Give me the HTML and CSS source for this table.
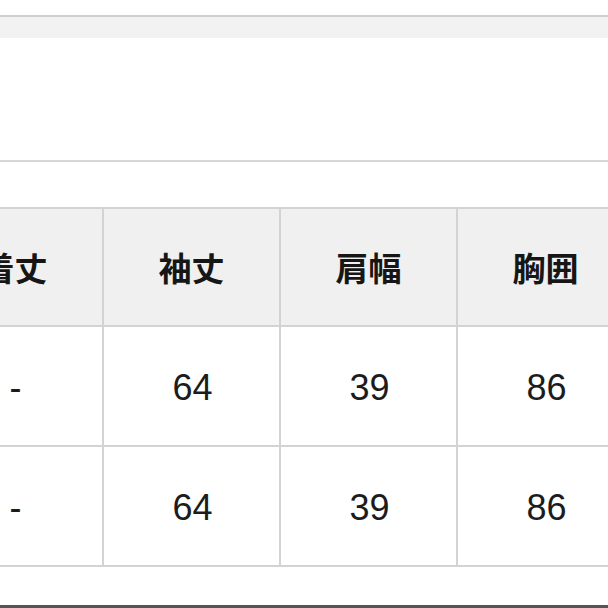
FILE: index.html
```html
<!DOCTYPE html>
<html lang="ja">
<head>
<meta charset="utf-8">
<link rel="stylesheet" href="styles.css">
</head>
<body>
<div class="page">
  <div class="band"></div>
  <div class="blank"></div>
  <div class="rule"></div>
  <div class="size-table">
    <div class="cell head">着丈</div>
    <div class="cell head">袖丈</div>
    <div class="cell head">肩幅</div>
    <div class="cell head">胸囲</div>
    <div class="cell">-</div>
    <div class="cell">64</div>
    <div class="cell">39</div>
    <div class="cell">86</div>
    <div class="cell">-</div>
    <div class="cell">64</div>
    <div class="cell">39</div>
    <div class="cell">86</div>
  </div>
  <div class="footer-line"></div>
</div>
</body>
</html>
```
FILE: styles.css
```css
html, body {
  margin: 0;
  padding: 0;
  overflow: hidden;
  background: #ffffff;
  width: 608px;
  height: 608px;
}
.page {
  padding-top: 15px;
  display: flex;
  flex-direction: column;
}
.band {
  border-top: 2px solid #cfcfcf;
  height: 21px;
  background: #f2f2f2;
}
.blank {
  height: 122px;
}
.rule {
  border-top: 2px solid #d6d6d6;
  height: 45px;
}
.size-table {
  display: grid;
  grid-template-columns: repeat(4, 175px);
  grid-template-rows: 116px 118px 118px;
  gap: 2px;
  padding: 2px;
  background: #d3d3d3;
  margin-left: -75px;
  width: max-content;
}
.cell {
  background: #ffffff;
  display: flex;
  align-items: center;
  justify-content: center;
  padding: 4px 0 0 2px;
  font-family: "Liberation Sans", Arial, sans-serif;
  font-size: 36px;
  color: #1c1c1c;
}
.cell.head {
  background: #f0f0f0;
  padding: 0;
  font-family: "Noto Sans CJK JP", sans-serif;
  font-weight: 700;
  font-size: 33px;
  color: #161616;
}
.footer-line {
  margin-top: 38px;
  height: 3px;
  background: #555555;
}
```
